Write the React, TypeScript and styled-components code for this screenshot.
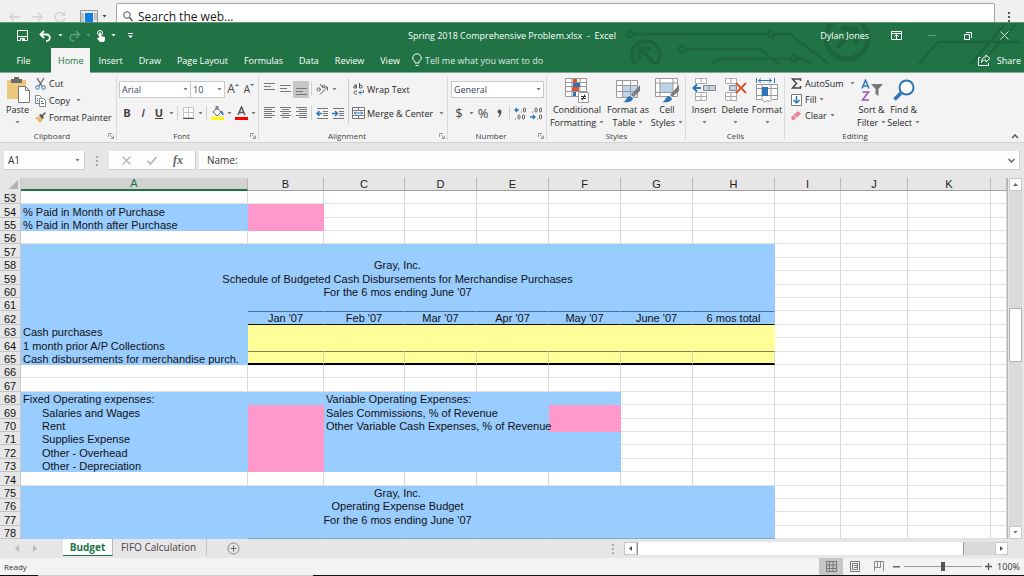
import React from "react";
import styled, { createGlobalStyle, css } from "styled-components";

const green = "#217346";
const ui = '"Open Sans", "Noto Sans", sans-serif';
const arial = '"Liberation Sans", Arial, sans-serif';

const fills = {
  none: "#ffffff",
  blue: "#99ccff",
  pink: "#ff99cc",
  yellow: "#ffff99",
} as const;
type Fill = keyof typeof fills;

const GlobalStyle = createGlobalStyle`
  *, *::before, *::after { box-sizing: border-box; }
  body { margin: 0; background: #e6e6e6; font-family: ${ui}; font-size: 9px; color: #262626; }
  button, input, select { font-family: inherit; font-size: inherit; color: inherit; margin: 0; }
  button { border: 0; padding: 0; background: none; white-space: nowrap; }
  svg { display: block; flex: none; }
`;

const Page = styled.div`
  display: flex;
  flex-direction: column;
  min-height: 100vh;
  overflow: hidden;
`;

/* ---------- browser strip ---------- */

const BrowserBar = styled.div`
  display: flex;
  height: 22px;
  padding: 3px 0 0 3px;
  background: #f0f0f0;
`;
const BrowserButton = styled.button<{ $width?: number }>`
  display: flex;
  align-items: center;
  justify-content: center;
  gap: 4px;
  width: ${(p) => p.$width ?? 23}px;
  height: 27px;
`;
const SearchBox = styled.label`
  display: flex;
  align-items: center;
  flex: 1;
  gap: 5px;
  height: 27px;
  padding-left: 6px;
  border: 1px solid #a3a3a3;
  border-radius: 2px;
  background: #fff;
`;
const SearchInput = styled.input`
  flex: 1;
  min-width: 0;
  padding: 0;
  border: 0;
  outline: 0;
  background: none;
  font-size: 12px;
  color: #1a1a1a;
`;

/* ---------- title and tabs ---------- */

const Header = styled.header`
  position: relative;
  background: ${green};
  color: #fff;
`;
const Circuit = styled.svg`
  position: absolute;
  top: 1px;
  right: 0;
`;
const TitleBar = styled.div`
  position: relative;
  display: grid;
  grid-template-columns: 1fr auto 1fr;
  align-items: center;
  height: 26px;
  border-top: 1px solid #5d9776;
`;
const QuickAccess = styled.div`
  display: flex;
  align-items: center;
  padding-left: 14px;
`;
const QuickButton = styled.button<{ $width?: number; $faded?: boolean }>`
  display: flex;
  align-items: center;
  justify-content: center;
  width: ${(p) => p.$width ?? 16}px;
  height: 20px;
  opacity: ${(p) => (p.$faded ? 0.3 : 1)};
  color: #fff;
`;
const WindowTools = styled.div`
  display: flex;
  align-items: center;
  justify-content: flex-end;
  padding-right: 2px;
`;
const UserName = styled.span`
  margin-right: 9px;
`;
const WindowButton = styled(QuickButton).attrs({ $width: 36 })``;

const TabRow = styled.nav`
  position: relative;
  display: flex;
  align-items: stretch;
  height: 25px;
  border-bottom: 1px solid #7aab8f;
`;
const RibbonTab = styled.button<{ $active?: boolean; $file?: boolean }>`
  height: ${(p) => (p.$active ? 25 : 24)}px;
  padding: 0 ${(p) => (p.$active ? 7 : 8)}px;
  ${(p) => p.$file && css`width: 51px; padding: 0 4px 0 0;`}
  background: ${(p) => (p.$active ? "#f3f3f3" : "transparent")};
  color: ${(p) => (p.$active ? green : "#fff")};
`;
const TellMe = styled.button`
  display: flex;
  align-items: center;
  gap: 3px;
  margin-left: 4px;
  color: #dcebe2;
`;
const Share = styled.button`
  display: flex;
  align-items: center;
  gap: 6px;
  margin-left: auto;
  padding-right: 3px;
  color: #fff;
`;

/* ---------- ribbon ---------- */

const Ribbon = styled.section`
  display: flex;
  height: 70px;
  background: #f3f3f3;
  border-bottom: 1px solid #d2d2d2;
`;
const GroupBox = styled.section<{ $width?: number }>`
  display: flex;
  flex-direction: column;
  flex: ${(p) => (p.$width ? `0 0 ${p.$width}px` : "1")};
  position: relative;
  &::after {
    content: "";
    position: absolute;
    top: 3px;
    right: 0;
    bottom: 2px;
    width: 1px;
    background: ${(p) => (p.$width ? "#dadada" : "transparent")};
  }
`;
const GroupBody = styled.div`
  display: flex;
  height: 57px;
`;
const GroupFooter = styled.div<{ $launcher?: boolean }>`
  display: grid;
  grid-template-columns: 1fr auto;
  align-items: center;
  height: 12px;
  padding-right: ${(p) => (p.$launcher ? 3 : 0)}px;
  font-size: 8px;
  line-height: 12px;
  text-align: center;
  color: #444;
`;
const GroupName = styled.span<{ $launcher?: boolean }>`
  padding-right: ${(p) => (p.$launcher ? 4 : 0)}px;
`;
const BigButton = styled.button<{ $width: number }>`
  display: flex;
  flex-direction: column;
  align-items: center;
  width: ${(p) => p.$width}px;
  padding-top: 4px;
  line-height: 13px;
`;
const BigIcon = styled.span`
  display: flex;
  align-items: center;
  justify-content: center;
  height: 26px;
`;
const BigLine = styled.span`
  display: flex;
  align-items: center;
  gap: 3px;
  height: 13px;
`;
const SmallStack = styled.div<{ $gap?: number }>`
  display: flex;
  flex-direction: column;
  gap: ${(p) => p.$gap ?? 4}px;
  padding-top: 4px;
`;
const SmallButton = styled.button<{ $wide?: boolean }>`
  display: flex;
  align-items: center;
  gap: 3px;
  height: 13px;
  & > svg:last-child:not(:first-child) { margin-left: ${(p) => (p.$wide ? 3 : 0)}px; }
`;
const Rows = styled.div`
  display: flex;
  flex-direction: column;
  gap: 6px;
  padding-top: 7px;
`;
const Row = styled.div`
  display: flex;
  align-items: center;
  height: 18px;
`;
const ToolButton = styled.button<{ $width?: number; $selected?: boolean }>`
  display: flex;
  align-items: center;
  justify-content: center;
  width: ${(p) => p.$width ?? 16}px;
  height: 17px;
  background: ${(p) => (p.$selected ? "#c6c6c6" : "transparent")};
  color: #444;
`;
const Glyph = styled.span<{ $style?: "bold" | "italic" | "underline"; $size?: number }>`
  font-size: ${(p) => p.$size ?? 11}px;
  line-height: 14px;
  font-weight: ${(p) => (p.$style === "italic" ? 600 : p.$style ? 700 : 400)};
  font-style: ${(p) => (p.$style === "italic" ? "italic" : "normal")};
  text-decoration: ${(p) => (p.$style === "underline" ? "underline" : "none")};
`;
const Separator = styled.span<{ $height?: number }>`
  width: 1px;
  height: ${(p) => p.$height ?? 14}px;
  margin: 0 2px;
  background: #cfcfcf;
`;
const SelectBox = styled.span<{ $width: number }>`
  display: flex;
  align-items: center;
  width: ${(p) => p.$width}px;
  height: 17px;
  padding-right: 2px;
  border: 1px solid #c8c8c8;
  background: #fff;
  & + & { margin-left: -1px; }
`;
const BareSelect = styled.select`
  flex: 1;
  min-width: 0;
  height: 15px;
  padding: 0 0 0 2px;
  border: 0;
  outline: 0;
  appearance: none;
  background: none;
  color: #33415c;
`;
const CollapseButton = styled.button`
  position: absolute;
  right: 5px;
  bottom: 3px;
  padding: 0;
`;

/* ---------- formula bar ---------- */

const FormulaBar = styled.div`
  display: flex;
  height: 35px;
  padding: 8px 4px;
  color: #333;
  font-size: 10px;
`;
const BarBox = styled.div<{ $width?: number }>`
  display: flex;
  align-items: center;
  flex: ${(p) => (p.$width ? `0 0 ${p.$width}px` : "1")};
  min-width: 0;
  height: 19px;
  padding: 0 4px;
  border-bottom: 1px solid #cfcfcf;
  border-right: 1px solid #cfcfcf;
  background: #fdfdfd;
`;
const BarInput = styled.input`
  flex: 1;
  min-width: 0;
  height: 17px;
  padding: 0;
  border: 0;
  outline: 0;
  background: none;
`;
const FormulaInput = styled(BarInput)`
  padding-left: 4px;
`;
const BarButton = styled.button`
  display: flex;
  align-items: center;
  justify-content: center;
  flex: 1;
`;
const Dots = styled.span<{ $width: number }>`
  display: flex;
  align-items: center;
  justify-content: center;
  width: ${(p) => p.$width}px;
`;
const Fx = styled.span`
  font-family: "Liberation Serif", serif;
  font-style: italic;
  font-weight: 700;
  font-size: 12px;
  line-height: 14px;
  color: #666;
`;
const Gap = styled.span`
  width: 3px;
`;

/* ---------- sheet ---------- */

const SheetArea = styled.main`
  display: flex;
  flex: 1;
`;
const Sheet = styled.table`
  flex: 1;
  width: 0;
  table-layout: fixed;
  border-collapse: separate;
  border-spacing: 0;
  align-self: flex-start;
  border-right: 1px solid #b5b5b5;
  font-family: ${arial};
  font-size: 11px;
  line-height: 9px;
  color: #111;

  th, td { padding: 0; white-space: nowrap; font-weight: 400; }
  tbody th, tbody td { padding-top: 3px; }
  thead tr { height: 13px; }
  tbody tr { height: 13px; }
  tbody tr:nth-child(5n + 2), tbody tr:nth-child(5n) { height: 14px; }
`;
const ColumnHead = styled.th<{ $selected?: boolean }>`
  height: 13px;
  line-height: 11px;
  text-align: center;
  background: ${(p) => (p.$selected ? "#d2d2d2" : "#e6e6e6")};
  color: ${(p) => (p.$selected ? green : "#222")};
  border-right: 1px solid #b8b8b8;
  border-bottom: ${(p) => (p.$selected ? `2px solid ${green}` : "1px solid #a0a0a0")};
`;
const Corner = styled.td`
  background: #e6e6e6;
  border-right: 1px solid #c8c8c8;
`;
const CornerMark = styled.svg`
  margin-left: auto;
`;
const RowHead = styled.th`
  text-align: center;
  background: #e6e6e6;
  border-right: 1px solid #c8c8c8;
  border-bottom: 1px solid #c4c4c4;
`;

type Rule = "header" | "sum" | "total" | "faint";
const ruleStyles: Record<Rule, ReturnType<typeof css>> = {
  header: css`
    border-top: 1px solid #4a6f94;
    border-bottom: 1px solid #111;
    && { padding-top: 1px; }
  `,
  sum: css`border-bottom: 1px solid #80804d;`,
  total: css`border-bottom: 2px solid #000; border-right: 1px solid #cddfab;`,
  faint: css`border-bottom: 1px solid #7da6cf;`,
};
const CellBox = styled.td<{ $fill: Fill; $center?: boolean; $indent?: boolean; $rule?: Rule }>`
  background: ${(p) => fills[p.$fill]};
  text-align: ${(p) => (p.$center ? "center" : "left")};
  && { padding-left: ${(p) => (p.$center ? 0 : p.$indent ? 21 : 2)}px; }
  border-right: 1px solid ${(p) => (p.$fill === "none" ? "#d9d9d9" : fills[p.$fill])};
  border-bottom: 1px solid ${(p) => (p.$fill === "none" ? "#e0e0e0" : fills[p.$fill])};
  ${(p) => p.$rule && ruleStyles[p.$rule]}
`;

const ScrollColumn = styled.div`
  display: flex;
  flex-direction: column;
  width: 16px;
  padding: 0 2px 0 1px;
`;
const ScrollTrack = styled.div`
  display: flex;
  flex: 1;
  flex-direction: column;
  background: #dadada;
`;
const ScrollSpace = styled.span<{ $share: number }>`
  flex: ${(p) => p.$share};
`;
const ScrollThumb = styled.span`
  height: 54px;
  border: 1px solid #b0b0b0;
  background: #fff;
`;
const ScrollButton = styled.button`
  display: flex;
  align-items: center;
  justify-content: center;
  width: 13px;
  height: 13px;
  background: #fff;
  border: 1px solid #c8c8c8;
`;

/* ---------- sheet tabs and status ---------- */

const SheetTabs = styled.div`
  display: flex;
  align-items: flex-start;
  height: 19px;
  padding-right: 16px;
  font-size: 10px;
`;
const TabArrows = styled.div`
  display: flex;
  align-items: center;
  gap: 14px;
  width: 63px;
  height: 19px;
  padding-left: 15px;
`;
const SheetTab = styled.button<{ $active?: boolean }>`
  height: 17px;
  line-height: 17px;
  ${(p) =>
    p.$active
      ? css`
          width: 50px;
          font-weight: 700;
          color: ${green};
          background: #fff;
          border-right: 1px solid #b5b5b5;
          border-bottom: 1px solid ${green};
        `
      : css`
          width: 94px;
          padding-right: 2px;
          color: #444;
          border-right: 1px solid #c4c4c4;
        `}
`;
const AddSheet = styled.button`
  margin: 3px 0 0 20px;
`;
const HorizontalScroll = styled.div`
  display: flex;
  margin: 3px 0 0 auto;
  flex: 0 1 406px;
  height: 13px;
`;
const HorizontalThumb = styled.span`
  flex: 1;
  background: #fff;
  border: solid #999;
  border-width: 0 1px;
`;
const HorizontalTrack = styled.span`
  width: 31px;
  background: #dadada;
`;
const StatusBar = styled.footer`
  display: flex;
  align-items: center;
  height: 17px;
  padding: 0 4px;
  background: #f3f3f3;
  font-size: 8px;
  color: #333;
`;
const ViewButton = styled.button<{ $selected?: boolean; $first?: boolean }>`
  display: flex;
  align-items: center;
  justify-content: center;
  width: 24px;
  height: 17px;
  margin-left: ${(p) => (p.$first ? "auto" : 0)};
  background: ${(p) => (p.$selected ? "#c6c6c6" : "transparent")};
`;
const ZoomRange = styled.input`
  width: 78px;
  height: 15px;
  margin: 0 3px;
  appearance: none;
  background: linear-gradient(#999, #999) center / 100% 1px no-repeat;
  &::-webkit-slider-thumb {
    appearance: none;
    width: 4px;
    height: 9px;
    background: #555;
  }
`;
const ZoomValue = styled.span`
  width: 26px;
  margin-left: 2px;
  font-size: 9px;
  text-align: right;
`;
const TaskbarEdge = styled.div`
  display: grid;
  grid-template-columns: 38px 275px 1fr;
  height: 1px;
  background: #111;
  &::before {
    content: "";
    grid-column: 2;
    background: #cfcfcf;
  }
`;

/* ---------- icons ---------- */

const Caret = ({ color = "#777" }: { color?: string }) => (
  <svg width="5" height="3" viewBox="0 0 5 3" aria-hidden="true">
    <path d="M0.5 0h4L2.500 2.500z" fill={color} />
  </svg>
);

const Lines = ({ widths, top = 0, align = "left" }: { widths: number[]; top?: number; align?: string }) => (
  <svg width="11" height="12" viewBox="0 0 11 12" stroke="#777">
    {widths.map((w, i) => {
      const x = align === "center" ? (11 - w) / 2 : align === "right" ? 11 - w : 0;
      const y = top + i * (widths.length > 3 ? 2 : 3) + 0.5;
      return <path key={i} d={`M${x} ${y}h${w}`} />;
    })}
  </svg>
);

const Launcher = () => (
  <svg width="6" height="6" viewBox="0 0 6 6" fill="none" stroke="#999">
    <path d="M.5 4V.5H4M2 2l3 3M5.500 2.500v3h-3" />
  </svg>
);

const Indent = ({ right }: { right?: boolean }) => (
  <svg width="13" height="11" viewBox="0 0 13 11" fill="none">
    <path d="M1 .5h11M7 3.500h5M7 5.500h5M7 7.500h5M1 10.500h11" stroke="#777" />
    <path d={right ? "M0 5.500h5M3 3l2.500 2.500L3 8" : "M1 5.500h5M3.500 3L1 5.500 3.500 8"} stroke="#2e75b6" strokeWidth="1.500" />
  </svg>
);

const Brush = () => (
  <>
    <path d="M24 7v6l-7 6-2-2z" fill="#7b7b7b" />
    <path d="M7 24c3 0 3-5 7-6l3 2c0 4-6 5-10 4z" fill="#2e75b6" />
    <path d="M14.500 17.500l3 2.500" stroke="#fff" />
  </>
);

const CircuitArt = () => (
  <Circuit width="398" height="41" viewBox="626 23 398 41" fill="none" stroke="#1d653c" strokeWidth="2.500" aria-hidden="true">
    <circle cx="630" cy="34" r="3" />
    <path d="M633 34h135M774 34h16l40 31" />
    <circle cx="771" cy="34" r="3" />
    <circle cx="646" cy="55" r="14" strokeWidth="3.500" />
    <path d="M655 64l-14-14M639 60V48.500h12" strokeWidth="4" />
    <circle cx="682" cy="49" r="3" />
    <path d="M685 49h75l20 16M712 64l8-5.500h71M797 58.500h6l8 6" />
    <circle cx="794" cy="58.500" r="3" />
    <circle cx="847" cy="38" r="21" strokeWidth="5" />
    <path d="M837 47l18-18M841 28.500h15v15" strokeWidth="5" />
    <path d="M918 65l20-23h83M970 65l37-43M980 65l38-43" />
  </Circuit>
);

/* ---------- sheet data ---------- */

type Cell = { text?: string; span?: number; fill?: Fill; center?: boolean; indent?: boolean; rule?: Rule };
const repeat = (n: number, cell: Cell = {}): Cell[] => Array.from({ length: n }, () => cell);
const banner = (text?: string): Cell[] => [{ text, span: 8, fill: "blue", center: true }, ...repeat(4)];
const budget = (text: string, rule?: Rule): Cell[] => [
  { text, fill: "blue" },
  ...repeat(7, { fill: "yellow", rule }),
  ...repeat(4),
];
const expense = (label: string, variable?: string): Cell[] => [
  { text: label, fill: "blue", indent: true },
  { fill: "pink" },
  { text: variable, span: 3, fill: "blue" },
  { fill: variable ? "pink" : "blue" },
  ...repeat(6),
];

const months = ["Jan '07", "Feb '07", "Mar '07", "Apr '07", "May '07", "June '07", "6 mos total"];
const rows: Cell[][] = [
  repeat(12),
  [{ text: "% Paid in Month of Purchase", fill: "blue" }, { fill: "pink" }, ...repeat(10)],
  [{ text: "% Paid in Month after Purchase", fill: "blue" }, { fill: "pink" }, ...repeat(10)],
  repeat(12),
  banner(),
  banner("Gray, Inc."),
  banner("Schedule of Budgeted Cash Disbursements for Merchandise Purchases"),
  banner("For the 6 mos ending June '07"),
  banner(),
  [
    { fill: "blue" },
    ...months.map((text): Cell => ({ text, fill: "blue", center: true, rule: "header" })),
    ...repeat(4),
  ],
  budget("Cash purchases"),
  budget("1 month prior A/P Collections", "sum"),
  budget("Cash disbursements for merchandise purch.", "total"),
  repeat(12),
  repeat(12),
  [
    { text: "Fixed Operating expenses:", fill: "blue" },
    { fill: "blue" },
    { text: "Variable Operating Expenses:", span: 3, fill: "blue" },
    { fill: "blue" },
    ...repeat(6),
  ],
  expense("Salaries and Wages", "Sales Commissions, % of Revenue"),
  expense("Rent", "Other Variable Cash Expenses, % of Revenue"),
  expense("Supplies Expense"),
  expense("Other - Overhead"),
  expense("Other - Depreciation"),
  repeat(12),
  banner("Gray, Inc."),
  banner("Operating Expense Budget"),
  banner("For the 6 mos ending June '07"),
  [{ fill: "blue" }, ...repeat(7, { fill: "blue", rule: "faint" }), ...repeat(4)],
];
const columnWidths = [21, 227, 76, 81, 72, 72, 72, 72, 82, 66, 67, 83];
const letters = ["A", "B", "C", "D", "E", "F", "G", "H", "I", "J", "K", ""];

/* ---------- parts ---------- */

function Group({ name, width, launcher, children }: { name: string; width?: number; launcher?: boolean; children: React.ReactNode }) {
  return (
    <GroupBox $width={width} aria-label={name}>
      <GroupBody>{children}</GroupBody>
      <GroupFooter $launcher={launcher}>
        <GroupName $launcher={launcher}>{name}</GroupName>
        {launcher && <Launcher />}
      </GroupFooter>
    </GroupBox>
  );
}

function Big({ width, icon, lines }: { width: number; icon: React.ReactNode; lines: [string, string?] }) {
  return (
    <BigButton $width={width}>
      <BigIcon>{icon}</BigIcon>
      <BigLine>{lines[0]}</BigLine>
      <BigLine>
        {lines[1]}
        <Caret />
      </BigLine>
    </BigButton>
  );
}

const InnerPad = styled.div<{ $left: number; $gap?: number }>`
  display: flex;
  padding-left: ${(p) => p.$left}px;
  gap: ${(p) => p.$gap ?? 0}px;
`;
const EditingGroup = styled.div`
  display: flex;
  flex: 0 0 140px;
`;
const TallRule = styled.span`
  width: 1px;
  height: 46px;
  margin: 5px 3px 0 2px;
  background: #cfcfcf;
`;
const TextTool = styled.button`
  display: flex;
  align-items: center;
  gap: 2px;
  height: 17px;
  & > svg:last-child:not(:first-child) { margin-left: 4px; }
`;

function RibbonBar() {
  return (
    <Ribbon>
      <Group name="Clipboard" width={117} launcher>
        <Big
          width={35}
          lines={["Paste"]}
          icon={
            <svg width="24" height="26" viewBox="0 0 24 26">
              <path d="M1 3h19v19H1z" fill="#eec77f" />
              <path d="M5 2h3V0h5v2h3v4H5z" fill="#6d6d6d" />
              <path d="M12.500 9.500h7l4 4v12h-11z" fill="#fff" stroke="#777" />
              <path d="M19.500 9.500v4h4" fill="none" stroke="#777" />
            </svg>
          }
        />
        <SmallStack>
          <SmallButton>
            <svg width="11" height="12" viewBox="0 0 11 12" fill="none">
              <path d="M2 0l5 8M9 0L4 8" stroke="#666" strokeWidth="1.300" />
              <circle cx="2.500" cy="9.500" r="1.800" stroke="#2e75b6" />
              <circle cx="8.500" cy="9.500" r="1.800" stroke="#2e75b6" />
            </svg>
            Cut
          </SmallButton>
          <SmallButton $wide>
            <svg width="11" height="12" viewBox="0 0 11 12" fill="#fff" stroke="#888">
              <path d="M.5.5h4l2 2v6h-6z" />
              <path d="M4.500 3.500h4l2 2v6h-6z" />
              <path d="M6 6.500h2M6 8.500h3M2 3.500h1M2 5.500h1" stroke="#2e75b6" />
            </svg>
            Copy
            <Caret />
          </SmallButton>
          <SmallButton>
            <svg width="11" height="11" viewBox="0 0 11 11">
              <path d="M0 6l4-2 4 4-3 3z" fill="#eebb6e" />
              <path d="M4 3l2-1 1 1 3-3 1 1-3 3 1 2-2 1z" fill="#555" />
            </svg>
            Format Painter
          </SmallButton>
        </SmallStack>
      </Group>

      <Group name="Font" width={142} launcher>
        <InnerPad $left={2}>
          <Rows>
            <Row>
              <SelectBox $width={72}>
                <BareSelect aria-label="Font"><option>Arial</option></BareSelect>
                <Caret />
              </SelectBox>
              <SelectBox $width={35}>
                <BareSelect aria-label="Font size"><option>10</option></BareSelect>
                <Caret />
              </SelectBox>
              <ToolButton aria-label="Increase font size">
                <Glyph $size={12}>A</Glyph>
                <svg width="4" height="12" viewBox="0 0 4 12"><path d="M0 3l2-2 2 2z" fill="#2e75b6" /></svg>
              </ToolButton>
              <ToolButton aria-label="Decrease font size">
                <Glyph $size={10}>A</Glyph>
                <svg width="4" height="12" viewBox="0 0 4 12"><path d="M0 1l2 2 2-2z" fill="#2e75b6" /></svg>
              </ToolButton>
            </Row>
            <Row>
              <ToolButton aria-label="Bold"><Glyph $style="bold">B</Glyph></ToolButton>
              <ToolButton aria-label="Italic"><Glyph $style="italic">I</Glyph></ToolButton>
              <ToolButton aria-label="Underline"><Glyph $style="underline">U</Glyph></ToolButton>
              <ToolButton $width={8} aria-label="Underline styles"><Caret /></ToolButton>
              <Separator />
              <ToolButton aria-label="Borders">
                <svg width="11" height="12" viewBox="0 0 11 12" fill="none" stroke="#c4c4c4">
                  <path d="M.5.5h10v10H.5zM5.500.5v10M.5 5.500h10" fill="#fff" />
                  <path d="M0 11.500h11" stroke="#555" />
                </svg>
              </ToolButton>
              <ToolButton $width={8} aria-label="Border styles"><Caret /></ToolButton>
              <Separator />
              <ToolButton aria-label="Fill color">
                <svg width="13" height="14" viewBox="0 0 13 14">
                  <path d="M2 6l4-4 4 4-4 4z" fill="#fff" stroke="#666" />
                  <path d="M5 4V.5h2V4" fill="none" stroke="#666" />
                  <path d="M10 5c2 1 2 2 2 4-1-1-2-2-2-4z" fill="#2e75b6" stroke="#2e75b6" />
                  <path d="M0 11h13v3H0z" fill="#ff0" />
                </svg>
              </ToolButton>
              <ToolButton $width={8} aria-label="Fill colors"><Caret /></ToolButton>
              <ToolButton aria-label="Font color">
                <svg width="13" height="14" viewBox="0 0 13 14">
                  <path d="M3 9l3.500-8L10 9M4.500 6.500h4" fill="none" stroke="#555" strokeWidth="1.500" />
                  <path d="M0 11h13v3H0z" fill="#f00" />
                </svg>
              </ToolButton>
              <ToolButton $width={8} aria-label="Font colors"><Caret /></ToolButton>
            </Row>
          </Rows>
        </InnerPad>
      </Group>

      <Group name="Alignment" width={189} launcher>
        <InnerPad $left={2}>
          <Rows>
            <Row>
              <ToolButton aria-label="Top align"><Lines widths={[11, 7, 11]} /></ToolButton>
              <ToolButton aria-label="Middle align"><Lines widths={[11, 7, 11]} top={2} /></ToolButton>
              <ToolButton $selected aria-label="Bottom align"><Lines widths={[11, 7, 11]} top={5} /></ToolButton>
              <Separator />
              <ToolButton aria-label="Orientation">
                <svg width="12" height="12" viewBox="0 0 12 12" fill="none" stroke="#666">
                  <path d="M4 11.500l7-7M8 4h3.500V7.500" />
                  <circle cx="2.500" cy="6.500" r="1.500" />
                  <path d="M3 4.500l2 2.500M4 1l3 4" />
                  <circle cx="7.500" cy="3.500" r="1.300" />
                </svg>
              </ToolButton>
              <ToolButton $width={8} aria-label="Orientation options"><Caret /></ToolButton>
            </Row>
            <Row>
              <ToolButton aria-label="Align left"><Lines widths={[11, 8, 11, 8, 11, 8]} /></ToolButton>
              <ToolButton aria-label="Center"><Lines widths={[11, 7, 11, 7, 11, 7]} align="center" /></ToolButton>
              <ToolButton aria-label="Align right"><Lines widths={[11, 8, 11, 8, 11, 8]} align="right" /></ToolButton>
              <Separator />
              <ToolButton aria-label="Decrease indent"><Indent /></ToolButton>
              <ToolButton aria-label="Increase indent"><Indent right /></ToolButton>
            </Row>
          </Rows>
          <TallRule />
          <Rows>
            <Row>
              <TextTool>
                <svg width="13" height="14" viewBox="0 0 13 14" fill="none" stroke="#555">
                  <path d="M2 3h2.500v3H2.300a.8.800 0 010-1.600H4.500M7.500 1v5H9a1.200 1.200 0 000-2.700H7.500M5 9H3.500a1.400 1.400 0 000 3H5" />
                  <path d="M11.500 8v2.500H7M9 8.500l-2 2 2 2" stroke="#2e75b6" />
                </svg>
                Wrap Text
              </TextTool>
            </Row>
            <Row>
              <TextTool>
                <svg width="13" height="12" viewBox="0 0 13 12" fill="#fff" stroke="#777">
                  <path d="M.5.5h12v11H.5zM.5 3.500h12M.5 8.500h12M6.500.5v3M6.500 8.500v3" />
                  <path d="M2 6h9M4 4.500L2.500 6 4 7.500M9 4.500L10.500 6 9 7.500" fill="none" stroke="#2e75b6" />
                </svg>
                Merge &amp; Center
                <Caret />
              </TextTool>
            </Row>
          </Rows>
        </InnerPad>
      </Group>

      <Group name="Number" width={99} launcher>
        <InnerPad $left={3}>
          <Rows>
            <Row>
              <SelectBox $width={93}>
                <BareSelect aria-label="Number format"><option>General</option></BareSelect>
                <Caret />
              </SelectBox>
            </Row>
            <Row>
              <ToolButton aria-label="Accounting format"><Glyph $size={13}>$</Glyph></ToolButton>
              <ToolButton $width={8} aria-label="Currencies"><Caret /></ToolButton>
              <ToolButton aria-label="Percent style"><Glyph $size={13}>%</Glyph></ToolButton>
              <ToolButton aria-label="Comma style">
                <svg width="5" height="9" viewBox="0 0 5 9"><path d="M.5 2.500a2 2 0 114 0C4.500 5 3 8 1 8.500 2 7 2.500 6 2.300 4.500A2 2 0 01.5 2.500z" fill="#555" /></svg>
              </ToolButton>
              <Separator />
              <ToolButton aria-label="Increase decimal">
                <svg width="13" height="13" viewBox="0 0 13 13" fill="none" stroke="#666">
                  <path d="M1 3h4M3 1L1 3l2 2" stroke="#2e75b6" strokeWidth="1.300" />
                  <path d="M7 5h1M1 12h1" />
                  <rect x="9.500" y="1" width="2" height="4" rx="1" />
                  <rect x="4" y="8" width="2" height="4" rx="1" />
                  <rect x="8.500" y="8" width="2" height="4" rx="1" />
                </svg>
              </ToolButton>
              <ToolButton aria-label="Decrease decimal">
                <svg width="13" height="13" viewBox="0 0 13 13" fill="none" stroke="#666">
                  <path d="M0 10h5M3 8l2 2-2 2" stroke="#2e75b6" strokeWidth="1.300" />
                  <path d="M7 12h1M2 5h1" />
                  <rect x="9.500" y="8" width="2" height="4" rx="1" />
                  <rect x="5" y="1" width="2" height="4" rx="1" />
                  <rect x="9.500" y="1" width="2" height="4" rx="1" />
                </svg>
              </ToolButton>
            </Row>
          </Rows>
        </InnerPad>
      </Group>

      <Group name="Styles" width={139}>
        <InnerPad $left={2}>
          <Big
            width={56}
            lines={["Conditional", "Formatting"]}
            icon={
              <svg width="24" height="25" viewBox="0 0 24 25">
                <path d="M.5.500h21v18H.5zM.5 4.500h21M.5 8.500h21M.5 13.500h21M7 .5v18M15 .5v18" fill="#fff" stroke="#999" />
                <path d="M8 1h4v4H8zM7 9h7v4H7z" fill="#e0532f" />
                <path d="M8 5h7v4H8zM8 14h3v4H8z" fill="#2e75b6" />
                <path d="M13.500 14.500h10v10h-10z" fill="#fff" stroke="#999" />
                <path d="M16 18.500h5M16 20.500h5M20 16.500l-3 6" stroke="#333" />
              </svg>
            }
          />
          <Big
            width={46}
            lines={["Format as", "Table"]}
            icon={
              <svg width="25" height="25" viewBox="0 0 25 25">
                <path d="M.5 2.500h21v17H.5z" fill="#fff" />
                <path d="M6 7h16v12H6z" fill="#bdd3ea" />
                <path d="M.5 2.500h21v17H.5zM.5 7.500h21M.5 13.500h21M6.500 2v17M14.500 2v17" fill="none" stroke="#999" />
                <Brush />
              </svg>
            }
          />
          <Big
            width={32}
            lines={["Cell", "Styles"]}
            icon={
              <svg width="25" height="25" viewBox="0 0 25 25">
                <path d="M.5.500h22v18H.5z" fill="#fff" />
                <path d="M5 5h13v9H5z" fill="#bdd3ea" />
                <path d="M.5.500h22v18H.5zM.5 5h22M.5 14.500h22M5 .5v18M18 .5v18" fill="none" stroke="#999" />
                <Brush />
              </svg>
            }
          />
        </InnerPad>
      </Group>

      <Group name="Cells" width={99}>
        <InnerPad $left={3}>
          <Big
            width={30}
            lines={["Insert"]}
            icon={
              <svg width="24" height="24" viewBox="0 0 24 24">
                <path d="M3.500.500h11v5h-11zM9 .5v5M3.500 14.500h11v8h-11zM9 14.500v8M3.500 18.500h11" fill="#fff" stroke="#aaa" />
                <path d="M11.500 7.500h12v5h-12zM17 7.500v5" fill="#bdd3ea" stroke="#888" />
                <path d="M9 10H2M5 6.500L1.500 10 5 13.500" fill="none" stroke="#2e75b6" strokeWidth="2" />
              </svg>
            }
          />
          <Big
            width={32}
            lines={["Delete"]}
            icon={
              <svg width="24" height="24" viewBox="0 0 24 24">
                <path d="M2.500.500h11v5h-11zM8 .5v5M2.500 14.500h11v8h-11zM8 14.500v8M2.500 18.500h11" fill="#fff" stroke="#aaa" />
                <path d="M6.500 7.500h7v5h-7z" fill="#bdd3ea" stroke="#888" />
                <path d="M13 5l10 10M23 5L13 15" fill="none" stroke="#e0532f" strokeWidth="2" />
              </svg>
            }
          />
          <Big
            width={32}
            lines={["Format"]}
            icon={
              <svg width="22" height="25" viewBox="0 0 22 25">
                <path d="M2.500 2.500h13M5 .5l-2.500 2L5 4.500M13 .5l2.500 2-2.500 2M18.500 0v5M.5 0v5" fill="none" stroke="#2e75b6" />
                <path d="M.5 6.500h21v15H16l-2 2-3-1-2 1.500-3-2.500H.5zM.5 10.500h21M.5 17.500h21M6 6.500v15M15 6.500v15" fill="#fff" stroke="#999" />
                <path d="M6 9h6v9H6z" fill="#2e75b6" />
              </svg>
            }
          />
        </InnerPad>
      </Group>

      <EditingGroup>
        <Group name="Editing">
          <InnerPad $left={6}>
            <SmallStack $gap={3}>
              <SmallButton $wide>
                <svg width="11" height="11" viewBox="0 0 11 11"><path d="M9.500 3V1H1.500L5.500 5.500 1.500 10h8V8" fill="none" stroke="#444" strokeWidth="1.500" /></svg>
                AutoSum
                <Caret />
              </SmallButton>
              <SmallButton>
                <svg width="11" height="12" viewBox="0 0 11 12">
                  <path d="M.5.500h10v11H.5z" fill="#fff" stroke="#777" />
                  <path d="M5.500 2v7M2.500 6l3 3 3-3" fill="none" stroke="#2e75b6" strokeWidth="1.500" />
                </svg>
                Fill
                <Caret />
              </SmallButton>
              <SmallButton>
                <svg width="11" height="11" viewBox="0 0 11 11">
                  <path d="M0 7l7-6 3 3-7 6H1z" fill="#e98394" />
                  <path d="M2.500 5l3 3" stroke="#fff" strokeWidth=".8" />
                </svg>
                Clear
                <Caret />
              </SmallButton>
            </SmallStack>
          </InnerPad>
          <InnerPad $left={1}>
            <Big
              width={32}
              lines={["Sort &", "Filter"]}
              icon={
                <svg width="22" height="23" viewBox="0 0 22 23" fill="none">
                  <path d="M1 9.500L4.500 1 8 9.500M2 7h5" stroke="#2e75b6" strokeWidth="1.500" />
                  <path d="M1.500 13h6l-6 8h6.500" stroke="#9355b5" strokeWidth="1.500" />
                  <path d="M10 5h12l-4.500 5v7l-3-2v-5z" fill="#777" />
                </svg>
              }
            />
            <Big
              width={32}
              lines={["Find &", "Select"]}
              icon={
                <svg width="22" height="23" viewBox="0 0 22 23" fill="none" stroke="#2e75b6">
                  <circle cx="13.500" cy="8.500" r="7" strokeWidth="2" fill="#fff" />
                  <path d="M8 14l-6.500 6.500" strokeWidth="3.500" />
                </svg>
              }
            />
          </InnerPad>
        </Group>
      </EditingGroup>
      <GroupBox>
        <CollapseButton aria-label="Collapse the ribbon">
          <svg width="8" height="5" viewBox="0 0 8 5"><path d="M1 4l3-3 3 3" fill="none" stroke="#555" strokeWidth="1.500" /></svg>
        </CollapseButton>
      </GroupBox>
    </Ribbon>
  );
}

const dotColumn = (color: string, size = 2) => (
  <svg width="3" height="12" viewBox="0 0 3 12" fill={color}>
    <path d={`M0 1h${size}v${size}H0zM0 5h${size}v${size}H0zM0 9h${size}v${size}H0z`} />
  </svg>
);

export default function App() {
  return (
    <Page>
      <GlobalStyle />
      <BrowserBar>
        <BrowserButton aria-label="Back" $width={22}>
          <svg width="11" height="10" viewBox="0 0 11 10" fill="none" stroke="#d0d0d0" strokeWidth="1.300"><path d="M11 5H1M5 1L1 5l4 4" /></svg>
        </BrowserButton>
        <BrowserButton aria-label="Forward" $width={24}>
          <svg width="11" height="10" viewBox="0 0 11 10" fill="none" stroke="#d0d0d0" strokeWidth="1.300"><path d="M0 5h10M6 1l4 4-4 4" /></svg>
        </BrowserButton>
        <BrowserButton aria-label="Reload" $width={22}>
          <svg width="12" height="12" viewBox="0 0 12 12" fill="none" stroke="#d0d0d0" strokeWidth="1.300"><path d="M10 3.500A4.800 4.800 0 1010.800 7M10.500.500v3.500H7" /></svg>
        </BrowserButton>
        <BrowserButton aria-label="Page view" $width={45}>
          <svg width="18" height="14" viewBox="0 0 18 14">
            <path d="M.5.500h17v13H.5z" fill="#e8e8e8" stroke="#999" />
            <path d="M1 3h3v10H1zM14 3h3v7h-3z" fill="#c4c4c4" />
            <path d="M5 3h8v11H5z" fill="#0d7de0" />
          </svg>
          <Caret color="#444" />
        </BrowserButton>
        <SearchBox>
          <svg width="10" height="11" viewBox="0 0 10 11" fill="none" stroke="#555"><circle cx="4" cy="4" r="3.300" /><path d="M6.500 6.500L9.500 10" strokeWidth="1.500" /></svg>
          <SearchInput aria-label="Search the web" defaultValue="Search the web..." />
        </SearchBox>
        <BrowserButton aria-label="More" $width={29}>{dotColumn("#555")}</BrowserButton>
      </BrowserBar>

      <Header>
        <CircuitArt />
        <TitleBar>
          <QuickAccess>
            <QuickButton aria-label="Save">
              <svg width="11" height="11" viewBox="0 0 11 11" fill="none" stroke="#fff"><path d="M.5.500h10v10H.5zM.5 6.500h10" /><path d="M3 8h5v3H3z" fill="#fff" stroke="none" /><path d="M4.500 9v2" stroke={green} /></svg>
            </QuickButton>
            <QuickButton $width={30} aria-label="Undo">
              <svg width="12" height="12" viewBox="0 0 12 12" fill="none" stroke="#fff" strokeWidth="1.800"><path d="M5 1L1.500 4.500 5 8M2 4.500h5.500c4.500 0 4.500 6.500-.5 6.500" /></svg>
            </QuickButton>
            <QuickButton $width={1} aria-label="Undo list"><Caret color="#fff" /></QuickButton>
            <QuickButton $width={27} $faded aria-label="Redo">
              <svg width="12" height="12" viewBox="0 0 12 12" fill="none" stroke="#fff" strokeWidth="1.500"><path d="M7 1l3.500 3.500L7 8M10 4.500H4.500C0 4.500 0 11 5 11" /></svg>
            </QuickButton>
            <QuickButton $width={1} $faded aria-label="Redo list"><Caret color="#fff" /></QuickButton>
            <QuickButton $width={24} aria-label="Touch mode">
              <svg width="10" height="12" viewBox="0 0 10 12"><circle cx="4" cy="3" r="2.500" fill="none" stroke="#fff" /><path d="M3 2.500h2V6l4 1v3l-1 2H4L1 8.500l1-1 1 .8z" fill="#fff" /></svg>
            </QuickButton>
            <QuickButton $width={1} aria-label="Touch modes"><Caret color="#fff" /></QuickButton>
            <QuickButton $width={32} aria-label="Customize toolbar">
              <svg width="5" height="6" viewBox="0 0 5 6" fill="#fff"><path d="M0 0h5v1H0zM0 2.500h5L2.500 5z" /></svg>
            </QuickButton>
          </QuickAccess>
          <span>Spring 2018 Comprehensive Problem.xlsx&nbsp; -&nbsp; Excel</span>
          <WindowTools>
            <UserName>Dylan Jones</UserName>
            <WindowButton aria-label="Ribbon display options">
              <svg width="11" height="9" viewBox="0 0 11 9" fill="none" stroke="#fff"><path d="M.5.500h10v8H.5zM.5 2.500h10M5.500 8V4M3.500 5.500l2-2 2 2" /></svg>
            </WindowButton>
            <WindowButton $faded aria-label="Minimize">
              <svg width="8" height="1" viewBox="0 0 8 1"><path d="M0 0h8v1H0z" fill="#fff" /></svg>
            </WindowButton>
            <WindowButton aria-label="Restore">
              <svg width="8" height="8" viewBox="0 0 8 8" fill="none" stroke="#fff"><path d="M.5 2.500h5v5h-5zM2 .5h5.500V6" /></svg>
            </WindowButton>
            <WindowButton aria-label="Close">
              <svg width="9" height="9" viewBox="0 0 9 9" fill="none" stroke="#cfe3d7"><path d="M.5.500l8 8M8.500.500l-8 8" /></svg>
            </WindowButton>
          </WindowTools>
        </TitleBar>
        <TabRow>
          <RibbonTab $file>File</RibbonTab>
          <RibbonTab $active>Home</RibbonTab>
          {["Insert", "Draw", "Page Layout", "Formulas", "Data", "Review", "View"].map((t) => (
            <RibbonTab key={t}>{t}</RibbonTab>
          ))}
          <TellMe>
            <svg width="10" height="14" viewBox="0 0 10 14" fill="none" stroke="#fff"><path d="M3 10V8.500C1.500 7.500.8 6.500.8 5a4.200 4.200 0 018.400 0c0 1.500-.7 2.500-2.200 3.500V10zM3.500 12.500h3" /></svg>
            Tell me what you want to do
          </TellMe>
          <Share>
            <svg width="13" height="12" viewBox="0 0 13 12" fill="none" stroke="#fff"><path d="M2.500 3.500h-2v8h10V9M8 1l4 3.500L8 8V6C6 6 4.500 6.500 3.500 8.500 3.500 5 5.500 3 8 3z" /></svg>
            Share
          </Share>
        </TabRow>
      </Header>

      <RibbonBar />

      <FormulaBar>
        <BarBox $width={81}>
          <BarInput aria-label="Name box" defaultValue="A1" />
          <Caret />
        </BarBox>
        <Dots $width={24}>{dotColumn("#aaa")}</Dots>
        <BarBox $width={87}>
          <BarButton aria-label="Cancel">
            <svg width="9" height="9" viewBox="0 0 9 9"><path d="M.5.500l8 8M8.500.500l-8 8" stroke="#b5b5b5" strokeWidth="1.300" /></svg>
          </BarButton>
          <BarButton aria-label="Enter">
            <svg width="10" height="9" viewBox="0 0 10 9" fill="none"><path d="M.5 5l3 3 6-7" stroke="#b5b5b5" strokeWidth="1.800" /></svg>
          </BarButton>
          <BarButton aria-label="Insert function"><Fx>fx</Fx></BarButton>
        </BarBox>
        <Gap />
        <BarBox>
          <FormulaInput aria-label="Formula" defaultValue="Name:" />
          <svg width="7" height="5" viewBox="0 0 7 5"><path d="M.5 1l3 3 3-3" fill="none" stroke="#666" strokeWidth="1.500" /></svg>
        </BarBox>
      </FormulaBar>

      <SheetArea>
        <Sheet>
          <colgroup>
            {columnWidths.map((w, i) => <col key={i} style={{ width: w }} />)}
            <col />
          </colgroup>
          <thead>
            <tr>
              <Corner>
                <CornerMark width="11" height="10" viewBox="0 0 11 10"><path d="M9 0v9H0z" fill="#b2b2b2" /></CornerMark>
              </Corner>
              {letters.map((l, i) => <ColumnHead key={i} scope="col" $selected={l === "A"}>{l}</ColumnHead>)}
            </tr>
          </thead>
          <tbody>
            {rows.map((cells, r) => (
              <tr key={r}>
                <RowHead scope="row">{53 + r}</RowHead>
                {cells.map((c, i) => (
                  <CellBox key={i} colSpan={c.span} $fill={c.fill ?? "none"} $center={c.center} $indent={c.indent} $rule={c.rule}>
                    {c.text}
                  </CellBox>
                ))}
              </tr>
            ))}
          </tbody>
        </Sheet>
        <ScrollColumn>
          <ScrollButton aria-label="Scroll up">
            <svg width="5" height="3" viewBox="0 0 5 3"><path d="M0 3h5L2.500 0z" fill="#666" /></svg>
          </ScrollButton>
          <ScrollTrack>
            <ScrollSpace $share={117} />
            <ScrollThumb />
            <ScrollSpace $share={165} />
          </ScrollTrack>
          <ScrollButton aria-label="Scroll down"><Caret color="#666" /></ScrollButton>
        </ScrollColumn>
      </SheetArea>

      <SheetTabs>
        <TabArrows>
          <svg width="4" height="7" viewBox="0 0 4 7"><path d="M4 0v7L0 3.500z" fill="#bbb" /></svg>
          <svg width="4" height="7" viewBox="0 0 4 7"><path d="M0 0v7l4-3.500z" fill="#bbb" /></svg>
        </TabArrows>
        <SheetTab $active>Budget</SheetTab>
        <SheetTab>FIFO Calculation</SheetTab>
        <AddSheet aria-label="New sheet">
          <svg width="13" height="13" viewBox="0 0 13 13" fill="none" stroke="#888"><circle cx="6.500" cy="6.500" r="5.500" /><path d="M6.500 3.500v6M3.500 6.500h6" stroke="#666" /></svg>
        </AddSheet>
        <HorizontalScroll>
          <Dots $width={22}>{dotColumn("#aaa")}</Dots>
          <ScrollButton aria-label="Scroll left">
            <svg width="3" height="5" viewBox="0 0 3 5"><path d="M3 0v5L0 2.500z" fill="#555" /></svg>
          </ScrollButton>
          <HorizontalThumb />
          <HorizontalTrack />
          <ScrollButton aria-label="Scroll right">
            <svg width="3" height="5" viewBox="0 0 3 5"><path d="M0 0v5l3-2.500z" fill="#555" /></svg>
          </ScrollButton>
        </HorizontalScroll>
      </SheetTabs>

      <StatusBar>
        Ready
        <ViewButton $first $selected aria-label="Normal view">
          <svg width="11" height="11" viewBox="0 0 11 11" fill="none" stroke="#777"><path d="M.5 0v11M3.500 0v11M7 0v11M10.500 0v11M0 .5h11M0 4h11M0 7.500h11M0 10.500h11" /></svg>
        </ViewButton>
        <ViewButton aria-label="Page layout view">
          <svg width="10" height="11" viewBox="0 0 10 11" fill="none" stroke="#777"><path d="M.5.500h9v10h-9zM2.500 2.500h5v6h-5zM4 4.500h3M4 6.500h3" /></svg>
        </ViewButton>
        <ViewButton aria-label="Page break view">
          <svg width="10" height="11" viewBox="0 0 10 11" fill="none" stroke="#888"><path d="M.5 10V.5h9V10M3.500 0v6.500h3V0M0 6.500h3" /></svg>
        </ViewButton>
        <button aria-label="Zoom out">
          <svg width="10" height="9" viewBox="0 0 10 9"><path d="M2 4h7v1.500H2z" fill="#666" /></svg>
        </button>
        <ZoomRange type="range" aria-label="Zoom" min={0} max={200} defaultValue={100} />
        <button aria-label="Zoom in">
          <svg width="7" height="9" viewBox="0 0 7 9"><path d="M0 4.500h7M3.500 1v7" stroke="#555" strokeWidth="1.300" /></svg>
        </button>
        <ZoomValue>100%</ZoomValue>
      </StatusBar>
      <TaskbarEdge />
    </Page>
  );
}
